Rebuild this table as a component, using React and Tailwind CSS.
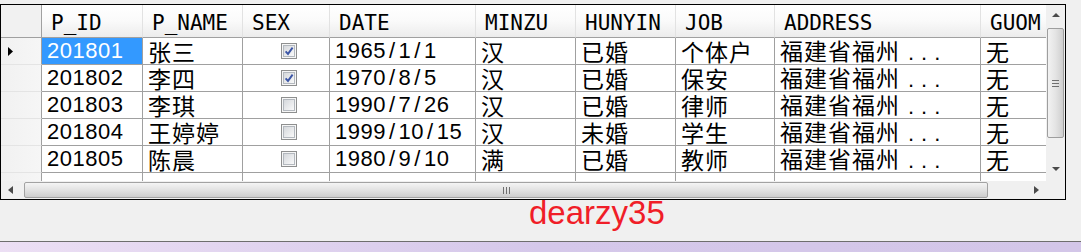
import React from "react";

const COLS = [
  { key: "id", label: "P_ID", w: "w-[101px]" },
  { key: "name", label: "P_NAME", w: "w-[100px]" },
  { key: "sex", label: "SEX", w: "w-[87px]" },
  { key: "date", label: "DATE", w: "w-[146px]" },
  { key: "minzu", label: "MINZU", w: "w-[100px]" },
  { key: "hunyin", label: "HUNYIN", w: "w-[100px]" },
  { key: "job", label: "JOB", w: "w-[99px]" },
  { key: "address", label: "ADDRESS", w: "w-[206px]" },
  { key: "guom", label: "GUOM", w: "w-[100px]" },
];

const ROWS = [
  { id: "201801", name: "张三", sex: true, date: "1965/1/1", minzu: "汉", hunyin: "已婚", job: "个体户", address: "福建省福州", guom: "无" },
  { id: "201802", name: "李四", sex: true, date: "1970/8/5", minzu: "汉", hunyin: "已婚", job: "保安", address: "福建省福州", guom: "无" },
  { id: "201803", name: "李琪", sex: false, date: "1990/7/26", minzu: "汉", hunyin: "已婚", job: "律师", address: "福建省福州", guom: "无" },
  { id: "201804", name: "王婷婷", sex: false, date: "1999/10/15", minzu: "汉", hunyin: "未婚", job: "学生", address: "福建省福州", guom: "无" },
  { id: "201805", name: "陈晨", sex: false, date: "1980/9/10", minzu: "满", hunyin: "已婚", job: "教师", address: "福建省福州", guom: "无" },
];

const latin = "font-['Liberation_Sans',sans-serif] text-[22px] tracking-[0.5px] leading-[26px]";
const cjk = "font-['Noto_Sans_CJK_SC',sans-serif] text-[23px] tracking-[1px] leading-[26px]";

function CheckBox({ checked }) {
  return (
    <svg width="16" height="16" viewBox="0 0 16 16">
      <defs>
        <linearGradient id="cbfill" x1="0" y1="0" x2="1" y2="1">
          <stop offset="0" stopColor="#d3d6da" />
          <stop offset="1" stopColor="#fbfbfb" />
        </linearGradient>
      </defs>
      <rect x="0.5" y="0.5" width="15" height="15" fill="#f6f6f6" stroke="#8e8f8f" />
      <rect x="2.5" y="2.5" width="11" height="11" fill="url(#cbfill)" stroke="#b3b8be" />
      {checked && (
        <path d="M4.6 8.3 L7 10.9 L11.6 4.6" fill="none" stroke="#3c56a6" strokeWidth="1.9" />
      )}
    </svg>
  );
}

function DateText({ value }) {
  const parts = value.split("/");
  return (
    <span className={latin}>
      {parts.map((p, i) => (
        <React.Fragment key={i}>
          {i > 0 && <span className="px-[3px]">/</span>}
          {p}
        </React.Fragment>
      ))}
    </span>
  );
}

function Cell({ col, row, selected }) {
  let content = null;
  if (row) {
    if (col.key === "sex") {
      content = (
        <div className="flex w-full justify-center">
          <CheckBox checked={row.sex} />
        </div>
      );
    } else if (col.key === "id") {
      content = <span className={latin}>{row.id}</span>;
    } else if (col.key === "date") {
      content = <DateText value={row.date} />;
    } else if (col.key === "address") {
      content = (
        <span className={cjk}>
          {row.address}
          <span className="ml-[8px] font-['Liberation_Sans',sans-serif] text-[22px] tracking-[7px]">...</span>
        </span>
      );
    } else {
      content = <span className={cjk}>{row[col.key]}</span>;
    }
  }
  return (
    <div
      className={`${col.w} flex h-full shrink-0 items-center whitespace-nowrap border-b border-r border-[#a0a0a0] pl-[5px] ${
        selected ? "bg-[#3399ff] text-white" : "text-black"
      }`}
    >
      {content}
    </div>
  );
}

function Arrow({ dir }) {
  const paths = {
    up: "M0 4 L4 0 L8 4 Z",
    down: "M0 0 L8 0 L4 4 Z",
    left: "M5 0 L5 8 L0 4 Z",
    right: "M0 0 L5 4 L0 8 Z",
  };
  const size = dir === "up" || dir === "down" ? [8, 4] : [5, 8];
  return (
    <svg width={size[0]} height={size[1]} viewBox={`0 0 ${size[0]} ${size[1]}`}>
      <path d={paths[dir]} fill="#4a4a4a" />
    </svg>
  );
}

function VScroll() {
  return (
    <div className="flex w-[19px] shrink-0 flex-col bg-[#f0f0f0]">
      <div className="flex h-[20px] items-center justify-center">
        <Arrow dir="up" />
      </div>
      <div className="mx-[1px] mt-[3px] flex h-[110px] flex-col items-center justify-center gap-[2px] rounded-[2px] border border-[#9e9e9e] bg-gradient-to-r from-[#f2f2f2] via-[#e4e4e4] to-[#cfcfcf]">
        <div className="h-[1px] w-[7px] bg-[#6f6f6f]" />
        <div className="h-[1px] w-[7px] bg-[#6f6f6f]" />
        <div className="h-[1px] w-[7px] bg-[#6f6f6f]" />
      </div>
      <div className="flex-1" />
      <div className="mb-[2px] flex h-[20px] items-center justify-center">
        <Arrow dir="down" />
      </div>
    </div>
  );
}

function HScroll() {
  return (
    <div className="flex h-[18px] shrink-0">
      <div className="flex flex-1 items-center bg-[#f0f0f0]">
        <div className="flex w-[23px] shrink-0 items-center pl-[7px]">
          <Arrow dir="left" />
        </div>
        <div className="flex h-[16px] w-[964px] shrink-0 items-center justify-center gap-[2px] rounded-[2px] border border-[#a2a2a2] bg-gradient-to-b from-[#f4f4f4] via-[#e2e2e2] to-[#cdcdcd]">
          <div className="h-[7px] w-[1px] bg-[#6f6f6f]" />
          <div className="h-[7px] w-[1px] bg-[#6f6f6f]" />
          <div className="h-[7px] w-[1px] bg-[#6f6f6f]" />
        </div>
        <div className="flex-1" />
        <div className="flex w-[20px] shrink-0 items-center justify-center">
          <Arrow dir="right" />
        </div>
      </div>
      <div className="w-[19px] shrink-0 bg-[#f0f0f0]" />
    </div>
  );
}

function Grid() {
  const body = [...ROWS, null];
  return (
    <div className="flex h-[196px] w-[1066px] flex-col border border-black bg-white">
      <div className="flex min-h-0 flex-1">
        <div className="min-w-0 flex-1 overflow-hidden">
          <div className="w-max">
            {/* header */}
            <div className="flex h-[33px]">
              <div className="h-full w-[41px] shrink-0 border-b border-r border-[#a0a0a0] bg-[#f1f1f1]" />
              {COLS.map((c) => (
                <div
                  key={c.key}
                  className={`${c.w} flex h-full shrink-0 items-center border-b border-r border-b-[#a0a0a0] border-r-[#e2e2e2] bg-gradient-to-b from-white via-[#fafafa] to-[#ececec] pl-[9px] pt-[3px] font-['DejaVu_Sans_Mono',monospace] text-[21px] leading-[24px] text-black`}
                >
                  {c.label}
                </div>
              ))}
            </div>
            {/* rows */}
            {body.map((row, i) => (
              <div key={i} className="flex h-[27px]">
                <div className="flex h-full w-[41px] shrink-0 items-center border-b border-r border-b-[#e4e4e4] border-r-[#a0a0a0] bg-gradient-to-r from-[#f1f1f1] to-[#f6f6f6] pl-[7px]">
                  {i === 0 && (
                    <svg width="5" height="9" viewBox="0 0 5 9">
                      <path d="M0 0 L5 4.5 L0 9 Z" fill="#000" />
                    </svg>
                  )}
                </div>
                {COLS.map((c) => (
                  <Cell key={c.key} col={c} row={row} selected={i === 0 && c.key === "id"} />
                ))}
              </div>
            ))}
          </div>
        </div>
        <VScroll />
      </div>
      <HScroll />
    </div>
  );
}

export default function App() {
  return (
    <div className="flex h-[252px] w-[1081px] flex-col overflow-hidden bg-[#f0f0f0] pt-[4px]">
      <Grid />
      <div className="flex-1 pl-[529px] font-['Liberation_Sans',sans-serif] text-[33px] leading-[25px] text-[#f01e28]">
        dearzy35
      </div>
      <div className="h-[11px] shrink-0 border-t border-[#6e6e6e] bg-gradient-to-r from-[#ecdff4] via-[#d5c8ea] to-[#d3c6e8]" />
    </div>
  );
}
